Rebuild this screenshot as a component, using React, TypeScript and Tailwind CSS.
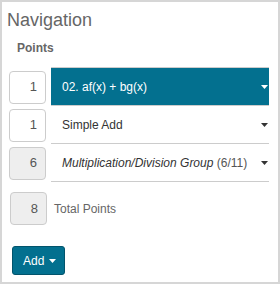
import React from "react";

const Caret = ({ color }: { color: string }) => (
  <svg width="7" height="4" viewBox="0 0 7 4" className="block">
    <polygon points="0,0 7,0 3.5,4" fill={color} />
  </svg>
);

const NumBox = ({ n, disabled }: { n: string; disabled?: boolean }) => (
  <div
    className={
      disabled
        ? "w-[37px] h-[33px] rounded-[4px] border border-[#cccccc] bg-[#eeeeee] text-[#555555] flex items-center justify-end pr-[8px] text-[13px]"
        : "w-[37px] h-[33px] rounded-[4px] border border-[#cccccc] bg-white text-[#555555] flex items-center justify-end pr-[8px] text-[13px]"
    }
  >
    {n}
  </div>
);

export default function App() {
  return (
    <div
      className="w-[280px] h-[284px] border-2 border-[#d6d6d6] bg-white overflow-hidden"
      style={{ fontFamily: '"Liberation Sans", Arial, sans-serif' }}
    >
      <div className="pt-[8px] pl-[5px] text-[18px] leading-[20px] text-[#666666]">Navigation</div>
      <div className="mt-[10px] pl-[15px] text-[12px] leading-[16px] font-bold text-[#666666]">Points</div>

      <div className="mt-[11px] flex flex-col">
        <div className="flex h-[39px]">
          <div className="w-[44px] pl-[7px] flex items-center pt-[1px]">
            <NumBox n="1" />
          </div>
          <div className="ml-[5px] w-[218px] border-t border-b border-[#cccccc] bg-[#03708f] flex items-center justify-between pl-[11px] pr-[1px] text-[12px] text-white">
            <span>02. af(x) + bg(x)</span>
            <Caret color="#ffffff" />
          </div>
        </div>
        <div className="flex h-[38px]">
          <div className="w-[44px] pl-[7px] flex items-center">
            <NumBox n="1" />
          </div>
          <div className="ml-[5px] w-[218px] border-b border-[#cccccc] flex items-center justify-between pl-[11px] pr-[1px] text-[12px] text-[#333333]">
            <span>Simple Add</span>
            <Caret color="#333333" />
          </div>
        </div>
        <div className="flex h-[38px]">
          <div className="w-[44px] pl-[7px] flex items-center">
            <NumBox n="6" disabled />
          </div>
          <div className="ml-[5px] w-[218px] border-b border-[#cccccc] flex items-center justify-between pl-[11px] pr-[1px] text-[12px] text-[#333333]">
            <span>
              <span className="italic">Multiplication/Division Group</span>{" "}
              <span className="text-[#555555]">(6/11)</span>
            </span>
            <Caret color="#333333" />
          </div>
        </div>
      </div>

      <div className="mt-[10px] flex items-center pl-[8px]">
        <NumBox n="8" disabled />
        <span className="ml-[7px] text-[12px] text-[#666666]">Total Points</span>
      </div>

      <div className="mt-[21px] pl-[10px]">
        <button className="h-[29px] w-[53px] rounded-[3px] border border-[#02546c] bg-[#03708f] text-white text-[12px] flex items-center pl-[10px] gap-[5px]">
          <span>Add</span>
          <svg width="7" height="4" viewBox="0 0 7 4" className="block">
            <polygon points="0,0 7,0 3.5,4" fill="#ffffff" />
          </svg>
        </button>
      </div>
    </div>
  );
}
